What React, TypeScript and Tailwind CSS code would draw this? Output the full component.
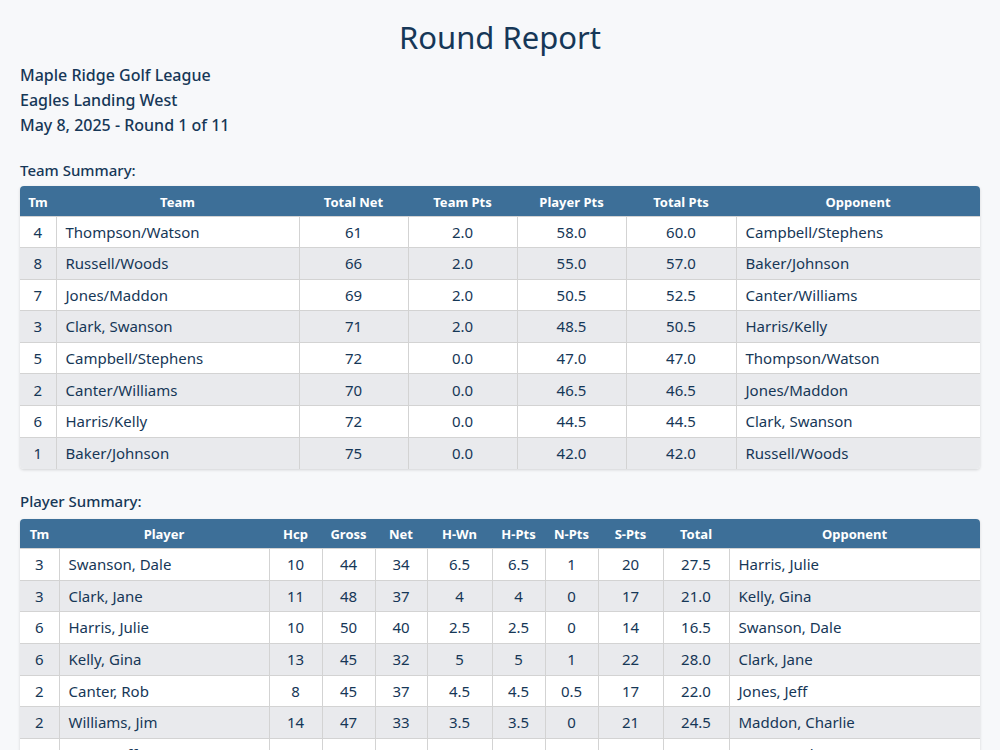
const FONT = "font-['Segoe_UI','Noto_Sans','Open_Sans',sans-serif]";

type TeamRow = [number, string, number, string, string, string, string];
type PlayerRow = [number, string, number, number, number, string, string, string, number, string, string];

const TEAMS: TeamRow[] = [
  [4, "Thompson/Watson", 61, "2.0", "58.0", "60.0", "Campbell/Stephens"],
  [8, "Russell/Woods", 66, "2.0", "55.0", "57.0", "Baker/Johnson"],
  [7, "Jones/Maddon", 69, "2.0", "50.5", "52.5", "Canter/Williams"],
  [3, "Clark, Swanson", 71, "2.0", "48.5", "50.5", "Harris/Kelly"],
  [5, "Campbell/Stephens", 72, "0.0", "47.0", "47.0", "Thompson/Watson"],
  [2, "Canter/Williams", 70, "0.0", "46.5", "46.5", "Jones/Maddon"],
  [6, "Harris/Kelly", 72, "0.0", "44.5", "44.5", "Clark, Swanson"],
  [1, "Baker/Johnson", 75, "0.0", "42.0", "42.0", "Russell/Woods"],
];

const PLAYERS: PlayerRow[] = [
  [3, "Swanson, Dale", 10, 44, 34, "6.5", "6.5", "1", 20, "27.5", "Harris, Julie"],
  [3, "Clark, Jane", 11, 48, 37, "4", "4", "0", 17, "21.0", "Kelly, Gina"],
  [6, "Harris, Julie", 10, 50, 40, "2.5", "2.5", "0", 14, "16.5", "Swanson, Dale"],
  [6, "Kelly, Gina", 13, 45, 32, "5", "5", "1", 22, "28.0", "Clark, Jane"],
  [2, "Canter, Rob", 8, 45, 37, "4.5", "4.5", "0.5", 17, "22.0", "Jones, Jeff"],
  [2, "Williams, Jim", 14, 47, 33, "3.5", "3.5", "0", 21, "24.5", "Maddon, Charlie"],
  [7, "Jones, Jeff", 11, 48, 37, "4.5", "4.5", "0.5", 17, "22.0", "Canter, Rob"],
];

// column widths in px, left-aligned columns flagged
const TEAM_COLS = [
  { label: "Tm", w: 36 },
  { label: "Team", w: 243, left: true },
  { label: "Total Net", w: 109 },
  { label: "Team Pts", w: 109 },
  { label: "Player Pts", w: 109 },
  { label: "Total Pts", w: 110 },
  { label: "Opponent", w: 244, left: true },
];

const PLAYER_COLS = [
  { label: "Tm", w: 39 },
  { label: "Player", w: 210, left: true },
  { label: "Hcp", w: 53 },
  { label: "Gross", w: 53 },
  { label: "Net", w: 52 },
  { label: "H-Wn", w: 65 },
  { label: "H-Pts", w: 53 },
  { label: "N-Pts", w: 53 },
  { label: "S-Pts", w: 65 },
  { label: "Total", w: 66 },
  { label: "Opponent", w: 251, left: true },
];

function ReportTable({
  cols,
  rows,
}: {
  cols: { label: string; w: number; left?: boolean }[];
  rows: (string | number)[][];
}) {
  return (
    <div className="overflow-hidden rounded-[4px] bg-white shadow-[0_1px_3px_rgba(0,0,0,0.15)]">
      <table className="w-full table-fixed border-collapse">
        <colgroup>
          {cols.map((c) => (
            <col key={c.label} style={{ width: c.w }} />
          ))}
        </colgroup>
        <thead>
          <tr className="h-[30px] bg-[#3d6f98]">
            {cols.map((c) => (
              <th key={c.label} className="p-0 pt-[3px] text-center text-[13px] font-bold text-white">
                {c.label}
              </th>
            ))}
          </tr>
        </thead>
        <tbody>
          {rows.map((r, i) => (
            <tr key={i} className={i % 2 === 1 ? "h-[31.6px] bg-[#e9eaed]" : "h-[31.6px] bg-white"}>
              {r.map((v, j) => (
                <td
                  key={j}
                  className={
                    "border-t border-l border-[#d3d3d3] p-0 text-[15px] text-[#163757] first:border-l-0 " +
                    (cols[j].left ? "pl-[9px] text-left" : "text-center")
                  }
                >
                  {v}
                </td>
              ))}
            </tr>
          ))}
        </tbody>
      </table>
    </div>
  );
}

export default function App() {
  return (
    <div className={`min-h-[750px] bg-[#f7f8fa] px-5 pt-[17px] text-[#163757] ${FONT}`}>
      <h1 className="text-center text-[31px] leading-[40px] text-[#163757]">Round Report</h1>

      {/* league info */}
      <div className="mt-[6px] text-[16px] font-medium leading-[25px]">
        <div>Maple Ridge Golf League</div>
        <div>Eagles Landing West</div>
        <div>May 8, 2025 - Round 1 of 11</div>
      </div>

      <div className="mt-[22px] mb-[6px] text-[15px] font-medium leading-[20px]">Team Summary:</div>
      <ReportTable cols={TEAM_COLS} rows={TEAMS} />

      <div className="mt-[22px] mb-[8px] text-[15px] font-medium leading-[20px]">Player Summary:</div>
      <ReportTable cols={PLAYER_COLS} rows={PLAYERS} />
    </div>
  );
}
